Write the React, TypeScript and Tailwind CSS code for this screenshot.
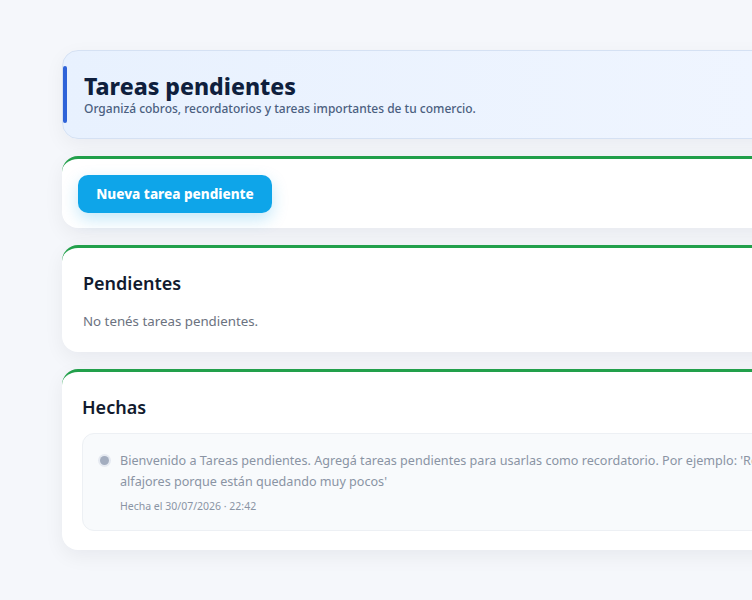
import React from 'react';

const font = { fontFamily: '"Noto Sans", "Open Sans", Arial, sans-serif' };

const Card: React.FC<{ children: React.ReactNode; className?: string }> = ({ children, className }) => (
  <section
    className={`rounded-2xl border-t-[3px] border-[#22a04b] bg-white shadow-[0_6px_20px_rgba(15,23,42,0.06)] ${className ?? ''}`}
  >
    {children}
  </section>
);

export default function App() {
  return (
    <div className="min-h-screen bg-[#f5f7fb] pt-[50px] pl-[62px] pb-[50px]" style={font}>
      <div className="flex w-[880px] flex-col gap-[17px]">
        {/* encabezado */}
        <header className="relative rounded-2xl border border-[#d5e1f3] bg-gradient-to-r from-[#e8f1fe] to-[#f1f6ff] pt-[20px] pb-[21px] pl-[21px] shadow-[0_6px_20px_rgba(15,23,42,0.05)]">
          <div className="absolute top-[15px] bottom-[15px] left-0 w-[4px] rounded-full bg-[#2f63d8]" />
          <h1 className="text-[23px] leading-[30px] font-extrabold text-[#0f1f3d]">Tareas pendientes</h1>
          <p className="text-[12px] leading-[16px] font-medium text-[#4b5f80]">
            Organizá cobros, recordatorios y tareas importantes de tu comercio.
          </p>
        </header>

        <Card className="px-4 pt-4 pb-[15px]">
          <button className="h-[38px] w-[194px] rounded-[10px] bg-[#0ea5e9] text-[13.5px] font-extrabold text-white shadow-[0_6px_16px_rgba(14,165,233,0.25)]">
            Nueva tarea pendiente
          </button>
        </Card>

        <Card className="px-[21px] pt-[21px] pb-[21px]">
          <h2 className="text-[18px] leading-[28px] font-semibold text-[#111a2e]">Pendientes</h2>
          <p className="mt-[14px] text-[13.3px] leading-[20px] text-[#6b7280]">No tenés tareas pendientes.</p>
        </Card>

        <Card className="px-[20px] pt-[21px] pb-[19px]">
          <h2 className="text-[18px] leading-[28px] font-semibold text-[#111a2e]">Hechas</h2>
          <div className="mt-[12px] flex gap-[11px] rounded-xl border border-[#edf0f4] bg-[#f8fafc] px-[17px] pt-[16px] pb-[16px]">
            <span className="mt-[6px] h-[9px] w-[9px] shrink-0 rounded-full bg-[#a3adbf] ring-2 ring-[#e6eaf1]" />
            <div className="w-[690px]">
              <p className="text-[12.6px] leading-[21px] text-[#8a94a4]">
                Bienvenido a Tareas pendientes. Agregá tareas pendientes para usarlas como recordatorio. Por ejemplo: 'Reponer alfajores porque están quedando muy pocos'
              </p>
              <p className="mt-[6px] text-[10.5px] leading-[16px] text-[#8a94a4]">Hecha el 30/07/2026 · 22:42</p>
            </div>
          </div>
        </Card>
      </div>
    </div>
  );
}
